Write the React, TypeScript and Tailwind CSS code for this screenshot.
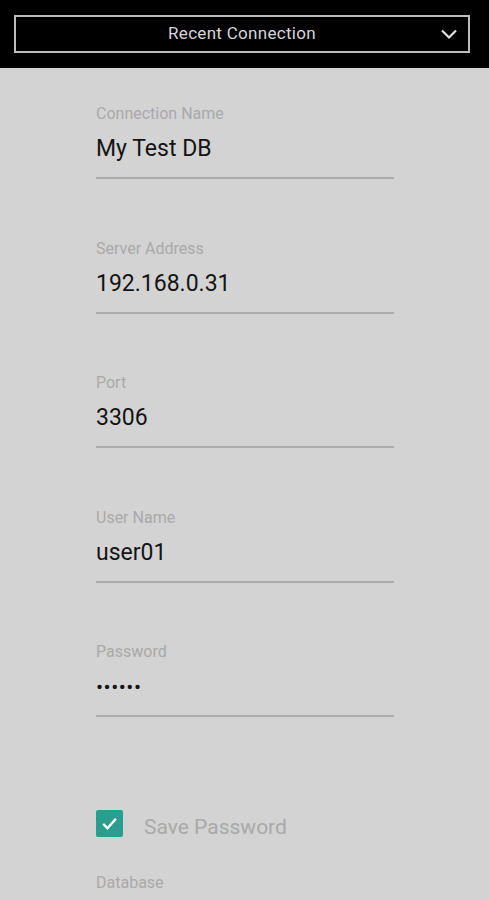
import React from 'react';

const fields = [
  { label: 'Connection Name', value: 'My Test DB' },
  { label: 'Server Address', value: '192.168.0.31' },
  { label: 'Port', value: '3306' },
  { label: 'User Name', value: 'user01' },
  { label: 'Password', value: '••••••', secret: true },
];

const Field: React.FC<{ label: string; value: string; secret?: boolean }> = ({ label, value, secret }) => (
  <div className="flex flex-col">
    <div className="text-[16px] leading-[20px] text-[#a9a9a9]">{label}</div>
    <div className={`mt-[10px] leading-[30px] text-[#141414] ${secret ? 'text-[21px] tracking-[0.5px]' : 'text-[23px]'}`}>{value}</div>
    <div className="mt-[13px] h-[2px] bg-[#ababab]" />
  </div>
);

export default function App() {
  return (
    <div className="w-[489px] h-[900px] overflow-hidden bg-[#d3d3d3]" style={{ fontFamily: 'Roboto, "Noto Sans", sans-serif' }}>
      <div className="h-[68px] bg-black pl-[14px] pr-[19px] pt-[15px]">
        <div className="relative h-[38px] border-2 border-[#bdbdbd] flex items-center justify-center">
          <span className="text-[17px] tracking-[0.3px] text-[#d6d6d6]">Recent Connection</span>
          <svg className="absolute right-[10px] top-[9px]" width="18" height="16" viewBox="0 0 18 16" fill="none">
            <path d="M2 4.5 L9 11.5 L16 4.5" stroke="#e0e0e0" strokeWidth="2.2" />
          </svg>
        </div>
      </div>
      <div className="w-[298px] ml-[96px] pt-[36px] flex flex-col gap-[59.5px]">
        {fields.map(f => (
          <Field key={f.label} {...f} />
        ))}
      </div>
      <div className="ml-[96px] mt-[93px] flex items-start">
        <div className="w-[27px] h-[27px] rounded-[2px] bg-[#2a9d8f] flex items-center justify-center">
          <svg width="19" height="19" viewBox="0 0 24 24" fill="none">
            <path d="M4 12.5 L9.5 18 L20 6" stroke="white" strokeWidth="3" />
          </svg>
        </div>
        <span className="ml-[21px] mt-[3px] text-[21px] leading-[28px] text-[#a9a9a9]">Save Password</span>
      </div>
      <div className="ml-[96px] mt-[32px] text-[16px] leading-[20px] text-[#a9a9a9]">Database</div>
    </div>
  );
}
